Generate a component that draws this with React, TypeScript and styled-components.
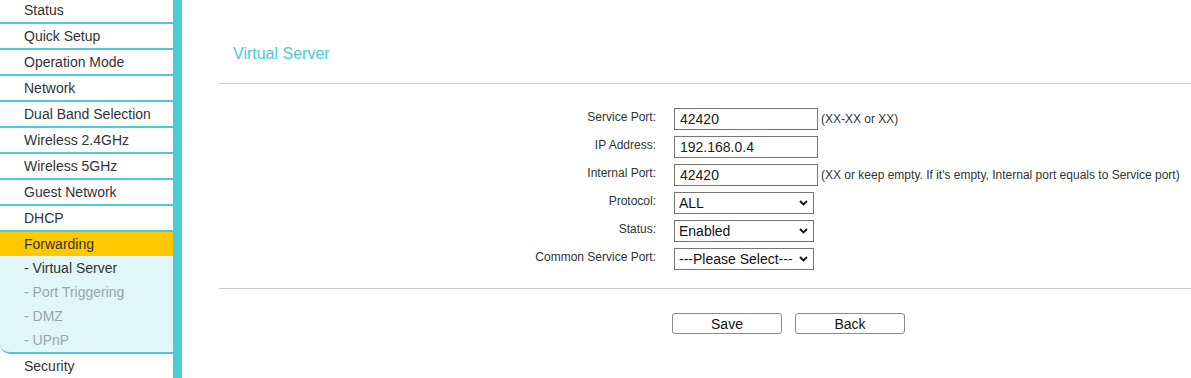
import React from "react";
import styled, { createGlobalStyle } from "styled-components";

const CYAN = "#4bcbd6";

const GlobalStyle = createGlobalStyle`
  html, body {
    margin: 0;
    padding: 0;
    background: #ffffff;
    font-family: "Liberation Sans", Arial, sans-serif;
    overflow: hidden;
  }
`;

const Page = styled.div`
  display: flex;
  height: 378px;
  overflow: hidden;
`;

const Sidebar = styled.nav`
  width: 173px;
  flex-shrink: 0;
  border-right: 9px solid ${CYAN};
  overflow: hidden;
`;

const NavList = styled.div`
  margin-top: -2px;
`;

const NavItem = styled.div<{ $active?: boolean }>`
  height: 24px;
  line-height: 24px;
  padding-left: 24px;
  font-size: 14px;
  color: #333333;
  background: ${(p) => (p.$active ? "#ffc800" : "#ffffff")};
  border-bottom: ${(p) => (p.$active ? "none" : `2px solid ${CYAN}`)};
  white-space: nowrap;
`;

const SubMenu = styled.div`
  background: #e1f6f9;
  border-bottom: 2px solid ${CYAN};
  border-bottom-left-radius: 10px;
`;

const SubItem = styled.div<{ $active?: boolean }>`
  height: 24px;
  line-height: 24px;
  padding-left: 24px;
  font-size: 14px;
  color: ${(p) => (p.$active ? "#333333" : "#9aa6a8")};
  white-space: nowrap;
`;

const Main = styled.main`
  flex: 1;
  padding-left: 37px;
`;

const Header = styled.div`
  padding: 44px 0 19px 14px;
  border-bottom: 1px solid #cccccc;
`;

const Title = styled.h1`
  margin: 0;
  font-size: 16px;
  line-height: 20px;
  font-weight: normal;
  color: ${CYAN};
`;

const Form = styled.div`
  padding: 21px 0 15px;
  border-bottom: 1px solid #cccccc;
`;

const FieldRow = styled.div`
  display: grid;
  grid-template-columns: 437px auto;
  column-gap: 18px;
  height: 28px;
  align-items: center;
`;

const Label = styled.label`
  text-align: right;
  font-size: 12px;
  line-height: 14px;
  color: #333333;
  padding-bottom: 4px;
`;

const Control = styled.div`
  display: flex;
  align-items: center;
  gap: 3px;
`;

const TextInput = styled.input`
  box-sizing: border-box;
  width: 144px;
  height: 22px;
  margin: 0;
  padding: 0 5px;
  border: 1px solid #767676;
  border-radius: 0;
  font-family: "Liberation Sans", Arial, sans-serif;
  font-size: 14px;
  color: #222222;
  outline: none;
`;

const SelectWrap = styled.div`
  position: relative;
  width: 140px;
  height: 22px;
`;

const Select = styled.select`
  box-sizing: border-box;
  width: 140px;
  height: 22px;
  margin: 0;
  padding: 0 0 0 4px;
  border: 1px solid #767676;
  border-radius: 0;
  background: #ffffff;
  appearance: none;
  font-family: "Liberation Sans", Arial, sans-serif;
  font-size: 14px;
  color: #111111;
  outline: none;
`;

const Chevron = styled.svg`
  position: absolute;
  right: 6px;
  top: 8px;
  pointer-events: none;
`;

const Hint = styled.span`
  font-size: 12px;
  color: #333333;
  white-space: nowrap;
`;

const Actions = styled.div`
  display: flex;
  gap: 13px;
  padding: 24px 0 0 453px;
`;

const Button = styled.button`
  box-sizing: border-box;
  width: 110px;
  height: 21px;
  padding: 0;
  border: 1px solid #8a8a8a;
  border-radius: 3px;
  background: #ffffff;
  font-family: "Liberation Sans", Arial, sans-serif;
  font-size: 14px;
  color: #111111;
`;

const menu = [
  "Status",
  "Quick Setup",
  "Operation Mode",
  "Network",
  "Dual Band Selection",
  "Wireless 2.4GHz",
  "Wireless 5GHz",
  "Guest Network",
  "DHCP",
];

const subMenu = ["Virtual Server", "Port Triggering", "DMZ", "UPnP"];

const Dropdown: React.FC<{ value: string }> = ({ value }) => (
  <SelectWrap>
    <Select defaultValue={value}>
      <option>{value}</option>
    </Select>
    <Chevron width="9" height="6" viewBox="0 0 9 6">
      <polyline
        points="1,1 4.5,4.5 8,1"
        fill="none"
        stroke="#111"
        strokeWidth="1.8"
      />
    </Chevron>
  </SelectWrap>
);

export default function App() {
  return (
    <>
      <GlobalStyle />
      <Page>
        <Sidebar>
          <NavList>
            {menu.map((m) => (
              <NavItem key={m}>{m}</NavItem>
            ))}
            <NavItem $active>Forwarding</NavItem>
            <SubMenu>
              {subMenu.map((s, i) => (
                <SubItem key={s} $active={i === 0}>
                  - {s}
                </SubItem>
              ))}
            </SubMenu>
            <NavItem>Security</NavItem>
          </NavList>
        </Sidebar>

        <Main>
          <Header>
            <Title>Virtual Server</Title>
          </Header>

          <Form>
            <FieldRow>
              <Label>Service Port:</Label>
              <Control>
                <TextInput defaultValue="42420" />
                <Hint>(XX-XX or XX)</Hint>
              </Control>
            </FieldRow>
            <FieldRow>
              <Label>IP Address:</Label>
              <Control>
                <TextInput defaultValue="192.168.0.4" />
              </Control>
            </FieldRow>
            <FieldRow>
              <Label>Internal Port:</Label>
              <Control>
                <TextInput defaultValue="42420" />
                <Hint>
                  (XX or keep empty. If it's empty, Internal port equals to
                  Service port)
                </Hint>
              </Control>
            </FieldRow>
            <FieldRow>
              <Label>Protocol:</Label>
              <Control>
                <Dropdown value="ALL" />
              </Control>
            </FieldRow>
            <FieldRow>
              <Label>Status:</Label>
              <Control>
                <Dropdown value="Enabled" />
              </Control>
            </FieldRow>
            <FieldRow>
              <Label>Common Service Port:</Label>
              <Control>
                <Dropdown value="---Please Select---" />
              </Control>
            </FieldRow>
          </Form>

          <Actions>
            <Button>Save</Button>
            <Button>Back</Button>
          </Actions>
        </Main>
      </Page>
    </>
  );
}
